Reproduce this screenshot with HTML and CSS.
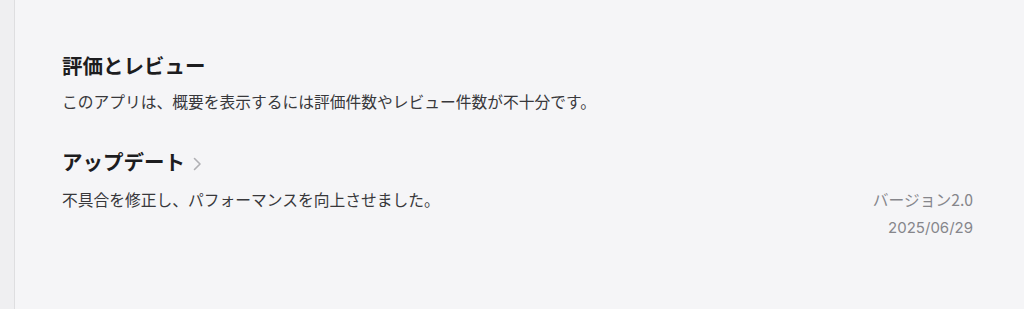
FILE: index.html
```html
<!DOCTYPE html>
<html lang="ja">
<head>
<meta charset="utf-8">
<link rel="stylesheet" href="styles.css">
</head>
<body>
<div class="page">
  <aside class="rail"></aside>
  <main class="content">
    <section class="section ratings">
      <h2 class="title">評価とレビュー</h2>
      <p class="text">このアプリは、概要を表示するには評価件数やレビュー件数が不十分です。</p>
    </section>
    <section class="section updates">
      <h2 class="title">アップデート<span class="chev"><svg width="9" height="14" viewBox="0 0 9 14"><path d="M1.5 1.5 L7 7 L1.5 12.5" fill="none" stroke="#b0b0b4" stroke-width="1.6" stroke-linecap="round" stroke-linejoin="round"/></svg></span></h2>
      <div class="update-row">
        <p class="text">不具合を修正し、パフォーマンスを向上させました。</p>
        <div class="meta">
          <div class="version">バージョン2.0</div>
          <div class="date">2025/06/29</div>
        </div>
      </div>
    </section>
  </main>
</div>
</body>
</html>
```
FILE: styles.css
```css
* { box-sizing: border-box; }
html, body {
  margin: 0;
  padding: 0;
  height: 100%;
}
body {
  background: #f5f5f7;
  font-family: "Noto Sans CJK JP", "Noto Sans", sans-serif;
  color: #1d1d1f;
}
.page {
  display: flex;
  min-height: 309px;
}
.rail {
  width: 15px;
  flex: none;
  background: #efeff1;
  border-right: 1px solid #dedee0;
}
.content {
  flex: 1;
  padding: 48px 51px 0 47px;
}
.section { margin: 0; }
.title {
  margin: 0;
  font-size: 20.5px;
  font-weight: 700;
  line-height: 34px;
  display: flex;
  align-items: center;
  color: #1d1d1f;
}
.chev {
  display: inline-flex;
  margin-left: 8px;
  margin-top: 5px;
}
.text {
  margin: 0;
  font-size: 15.75px;
  line-height: 22px;
  color: #38383b;
}
.ratings .text { margin-top: 9px; }
.updates { margin-top: 31px; }
.update-row {
  display: flex;
  justify-content: space-between;
  align-items: flex-start;
  margin-top: 11px;
}
.meta {
  text-align: right;
  color: #86868b;
  font-size: 15.75px;
  line-height: 22px;
}
.date {
  margin-top: 6px;
  font-family: "Inter", "Noto Sans", sans-serif;
  font-size: 15px;
}
```
